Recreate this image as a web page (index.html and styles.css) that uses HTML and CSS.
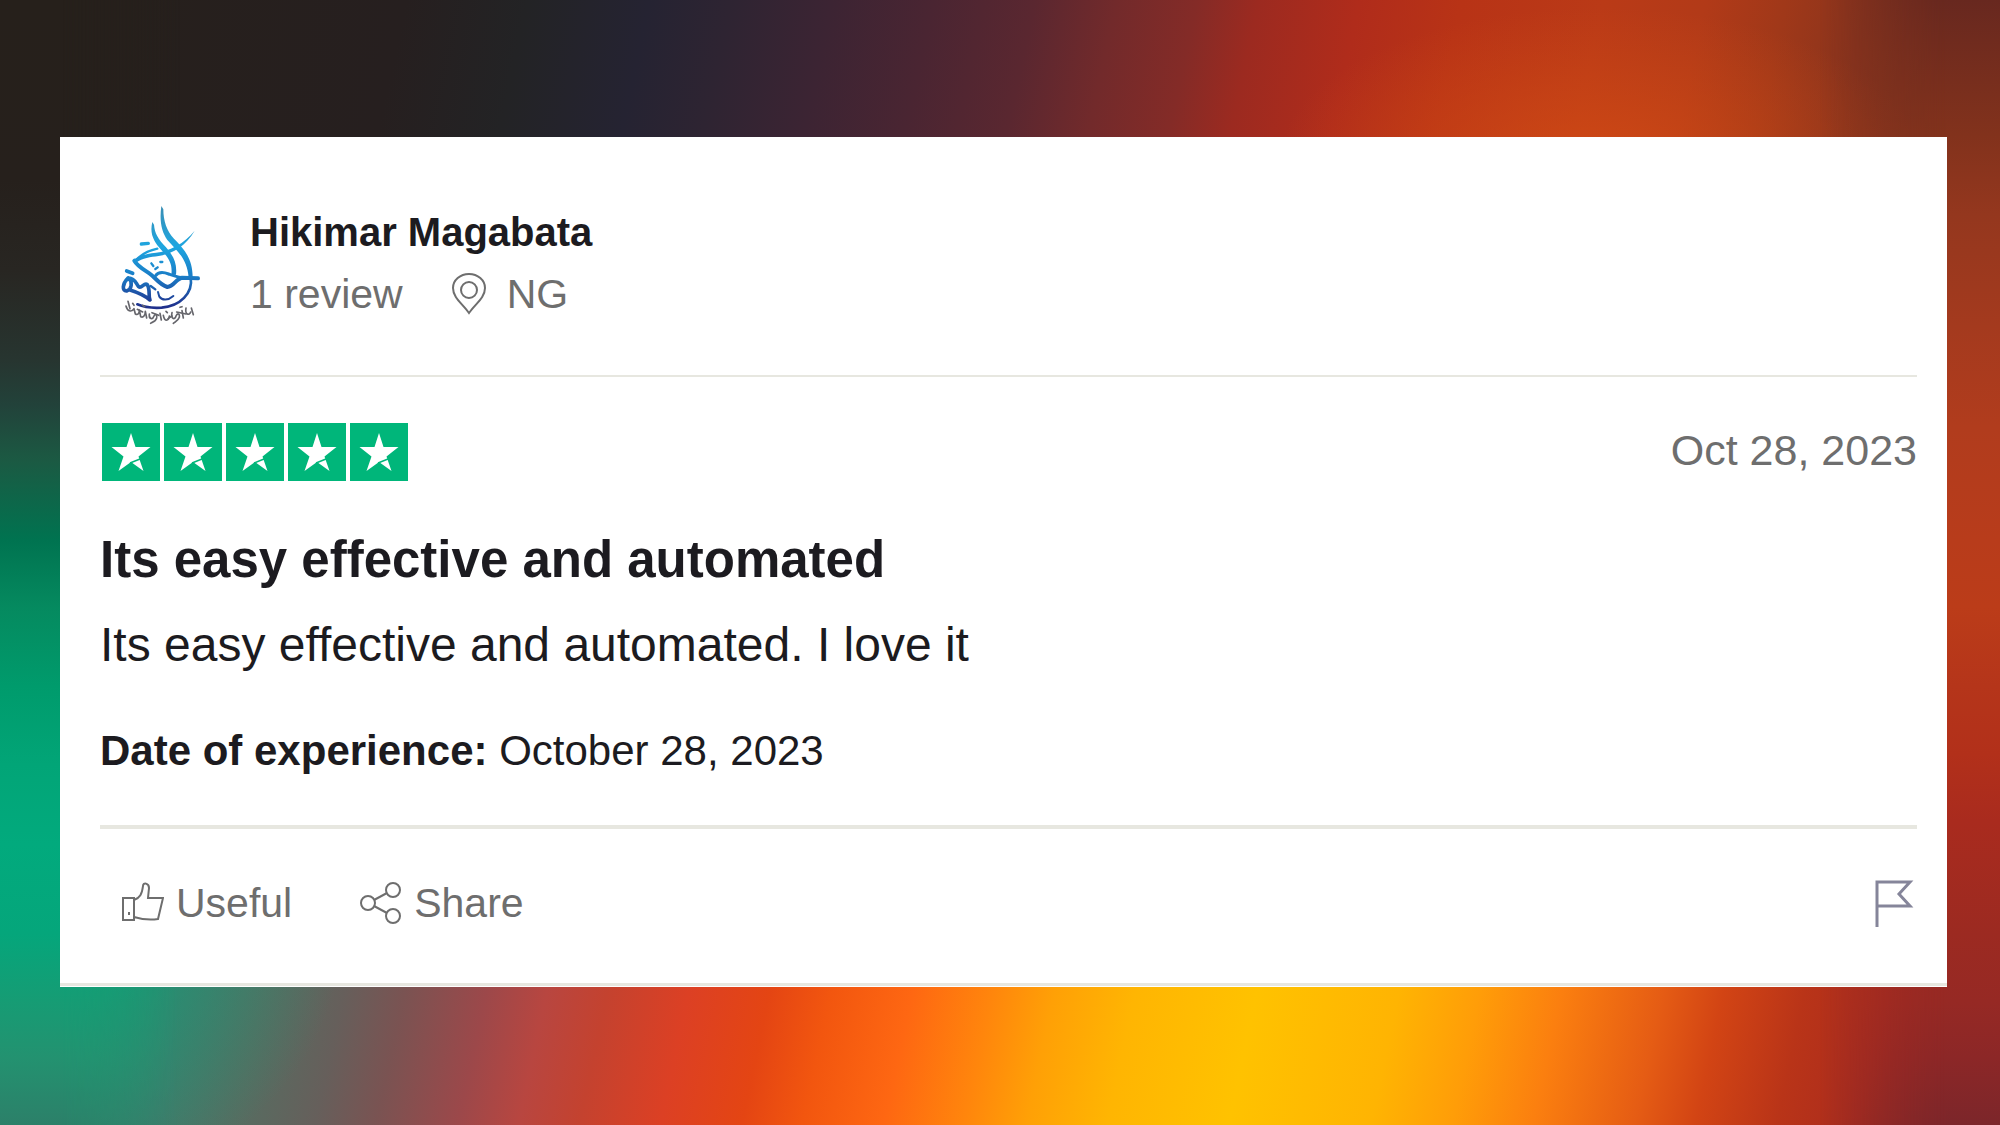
FILE: index.html
```
<!DOCTYPE html>
<html lang="en">
<head>
    <meta charset="UTF-8">
    <meta name="viewport" content="width=device-width, initial-scale=1.0">
    <title>Customer Review</title>
    <link rel="stylesheet" href="styles.css">
</head>
<body>
    <article class="card">
        <!-- Reviewer -->
        <header class="reviewer">
            <svg class="avatar" viewBox="0 0 360 450" fill="none" stroke-linecap="round" stroke-linejoin="round" aria-hidden="true">
                <defs>
                    <linearGradient id="ink" gradientUnits="userSpaceOnUse" x1="0" y1="50" x2="0" y2="350">
                        <stop offset="0" stop-color="#3a8fb5"/>
                        <stop offset="0.4" stop-color="#1ea6e0"/>
                        <stop offset="0.7" stop-color="#1a7cc6"/>
                        <stop offset="1" stop-color="#20308c"/>
                    </linearGradient>
                </defs>
                <g fill="url(#ink)">
                    <path d="M184 48 C178 92 184 124 202 150 C232 184 262 206 266 264 L278 262 C278 206 252 176 222 146 C200 124 190 92 190 58z"/>
                    <path d="M157 96 C148 132 162 156 184 180 C208 206 218 222 214 256 L228 254 C232 216 218 196 198 172 C174 146 164 130 162 104z"/>
                    <path d="M284 122 C254 160 208 184 168 188 C138 192 116 196 98 212 L106 220 C130 202 150 202 176 198 C222 190 258 166 284 122z"/>
                </g>
                <g stroke="url(#ink)">
                    <path d="M103 212 C112 228 130 238 148 250 C166 262 178 284 202 291 C222 290 228 266 246 263 L294 265" stroke-width="12"/>
                    <path d="M166 258 C174 246 190 246 206 252 C222 258 236 264 262 264" stroke-width="9"/>
                    <path d="M106 213 C125 190 145 182 172 176" stroke-width="7"/>
                    <path d="M124 162 L145 160" stroke-width="10"/>
                    <path d="M154 220 L160 228 M166 237 L173 232 M181 216 L187 216" stroke-width="7"/>
                    <path d="M272 262 C280 310 240 348 185 353 C152 355 128 350 112 343" stroke-width="8"/>
                    <path d="M80 243 L98 250" stroke-width="11"/>
                    <path d="M84 264 C66 282 66 304 80 303 C96 298 98 276 86 264 C106 264 108 282 116 290 C125 298 132 276 142 284 C152 300 144 320 150 330 C136 318 122 310 90 300" stroke-width="11"/>
                    <path d="M174 306 L178 320 C186 332 204 332 220 318" stroke-width="6"/>
                    <path d="M152 288 L166 298" stroke-width="7"/>
                </g>
                <g stroke="#66666c" stroke-width="5">
                    <path d="M84 334 L90 356 M78 348 C82 364 94 368 102 356 L106 372 C114 376 118 370 118 360 L122 380 C130 384 136 376 136 364 L140 384"/>
                    <path d="M148 372 C146 388 158 390 162 378 C166 370 172 374 170 384 C166 398 154 396 152 400 M180 370 L184 390 M190 376 C194 396 206 394 208 378 M198 364 L202 368"/>
                    <path d="M216 368 C212 386 224 392 228 378 C232 368 240 370 238 382 C234 394 224 396 220 400 M246 362 L250 384 M258 354 C254 374 268 378 272 366 M274 354 L280 374 M98 340 L102 346 M128 346 L134 350 M240 352 L246 350"/>
                    <path d="M112 358 L128 366 M156 368 L176 376 M204 386 L216 378 M230 366 L258 372"/>
                </g>
            </svg>
            <div class="reviewer-info">
                <h1 class="name">Hikimar Magabata</h1>
                <p class="meta">
                    <span>1 review</span>
                    <span class="place">
                        <svg class="pin" viewBox="0 0 36 42" fill="none" stroke="currentColor" stroke-width="2" aria-hidden="true">
                            <path d="M18 40 C12 31 2 25 2 15 A16 14 0 0 1 34 15 C34 25 24 31 18 40z"/>
                            <circle cx="18" cy="17" r="8"/>
                        </svg>
                        NG
                    </span>
                </p>
            </div>
        </header>

        <!-- Review -->
        <section class="review">
            <div class="rating">
                <svg class="stars" viewBox="0 0 306 58" role="img" aria-label="Rated 5 out of 5 stars">
                    <defs>
                        <g id="star">
                            <path fill="#00b67a" d="M0 0h58v58H0z"/>
                            <path fill="#fff" d="M29 10 L33.500 24 H48.500 L36.500 33.500 L37.500 36.500 L41.500 48 L29 39 L16.500 48 L21.500 33.500 L9.500 24 H24.500z"/>
                            <path stroke="#00b67a" stroke-width="1.500" d="M28 40 L38 36"/>
                        </g>
                    </defs>
                    <use href="#star"/>
                    <use href="#star" x="62"/>
                    <use href="#star" x="124"/>
                    <use href="#star" x="186"/>
                    <use href="#star" x="248"/>
                </svg>
                <time class="date" datetime="2023-10-28">Oct 28, 2023</time>
            </div>
            <h2 class="title">Its easy effective and automated</h2>
            <p class="text">Its easy effective and automated. I love it</p>
            <p class="experience"><b>Date of experience:</b> October 28, 2023</p>
        </section>

        <!-- Actions -->
        <footer class="actions">
            <button class="action" type="button">
                <svg class="icon" viewBox="0 0 42 42" fill="none" stroke="currentColor" stroke-width="2" aria-hidden="true">
                    <path d="M1 16 H12 V38 H1z M12 18 C18 16 20 12 21 4 C21 0 27 1 27 6 L26 16 H41 L36 37 C30 38 22 38 12 35"/>
                    <path d="M7 30v3"/>
                </svg>
                Useful
            </button>
            <button class="action" type="button">
                <svg class="icon" viewBox="0 0 42 42" fill="none" stroke="currentColor" stroke-width="2" aria-hidden="true">
                    <circle cx="8" cy="21" r="7"/>
                    <circle cx="33" cy="8" r="7"/>
                    <circle cx="33" cy="34" r="7"/>
                    <path d="M14 18 L27 11 M14 24 L27 31"/>
                </svg>
                Share
            </button>
            <button class="flag" type="button" aria-label="Report review">
                <svg class="flag-icon" viewBox="0 0 42 48" fill="none" stroke="currentColor" stroke-width="3" aria-hidden="true">
                    <path d="M2 48 V3 H35 L24 15 L35 27 H2"/>
                </svg>
            </button>
        </footer>
    </article>
</body>
</html>
```
FILE: styles.css
```
* {
    box-sizing: border-box;
}

body {
    position: relative;
    min-height: 100vh;
    margin: 0;
    padding: 137px 53px 138px 60px;
    font-family: "Liberation Sans", Arial, sans-serif;
    font-size: 41px;
    color: #1c1b20;
    /* warm glow, green glow, top band, bottom band */
    background:
        radial-gradient(ellipse 320px 150px at 80% 14%, #d24b14cc, #d24b1400) no-repeat,
        radial-gradient(ellipse 340px 260px at 0 84%, #0aa57add, #0aa57a00) no-repeat,
        linear-gradient(102deg, #26201b 0%, #261f1f 20%, #232325 26%, #252332 32%, #2e2432 36%, #3c2433 41%, #4a2532 46%, #5a2730 51%, #722a2b 55%, #842b27 59%, #9c2a20 62%, #b02c1b 67%, #b83316 72%, #ba3a17 79%, #b23a18 84%, #a03819 88%, #8a341d 92%, #76301f 97%, #6b2a20 100%) 0 0 / 100% 140px no-repeat,
        linear-gradient(102deg, #1f9672 0%, #2f8a6c 5%, #44796a 9%, #566d61 13%, #665f5b 17%, #7a5352 20%, #9c484a 24%, #b84640 27%, #c4422f 30%, #dc4024 34%, #e44513 38%, #f2560f 41%, #fe6712 45%, #ff860c 49%, #ffa006 52%, #ffb502 56%, #ffc200 62%, #ffb402 69%, #ff9d08 73%, #fb7f0f 77%, #e55c14 82%, #d24414 85%, #b93418 89%, #ab2c1e 93%, #922824 97%, #80262c 100%) 0 100% / 100% 140px no-repeat,
        #26201b;
}

/* side bands, faded into the top and bottom ones */
body::before,
body::after {
    content: "";
    position: absolute;
    top: 0;
    bottom: 0;
    width: 180px;
}

body::before {
    left: 0;
    background: linear-gradient(#26201b 0%, #26201c 16%, #282622 24%, #273530 32%, #22423a 36%, #1b5a43 41%, #007350 48%, #058a5f 54%, #009b6c 61%, #02a577 68%, #02aa7d 75%, #05a67b 83%, #169c74 89%, #239270 94%, #2c8069 100%);
    -webkit-mask-image: linear-gradient(to right, #000 34%, transparent);
    mask-image: linear-gradient(to right, #000 34%, transparent);
}

body::after {
    right: 0;
    background: linear-gradient(#68281f 0%, #82321c 12%, #94371e 19%, #a43a1e 29%, #b13c1d 38%, #b83c1b 48%, #bb3c19 54%, #b5351a 61%, #b2301a 67%, #a92b1e 73%, #9c2a21 83%, #962924 89%, #8c2727 94%, #7c262a 100%);
    -webkit-mask-image: linear-gradient(to left, #000 30%, transparent);
    mask-image: linear-gradient(to left, #000 30%, transparent);
}

.card {
    position: relative;
    z-index: 1;
    padding: 0 30px 0 40px;
    background: #fff;
    box-shadow: inset 0 -1px #fff, inset 0 -4px #e7e7e0;
}

h1,
h2,
p {
    margin: 0;
}

.reviewer {
    display: flex;
    align-items: center;
    gap: 30px;
    padding: 53px 0 35px;
    border-bottom: 2px solid #e7e7e0;
}

.avatar {
    flex: none;
    width: 120px;
    height: 150px;
}

.name {
    margin-bottom: 2px;
    font-size: 40px;
    line-height: 60px;
}

.meta {
    display: flex;
    align-items: center;
    gap: 48px;
    padding-bottom: 4px;
    line-height: 60px;
    color: #6e6e6e;
}

.place {
    display: flex;
    align-items: center;
    gap: 20px;
}

.pin {
    width: 36px;
    height: 42px;
}

.review {
    padding: 46px 0 44px;
    border-bottom: 4px solid #e7e7e0;
}

.rating {
    display: flex;
    align-items: flex-start;
    justify-content: space-between;
    padding-left: 2px;
}

.stars {
    width: 306px;
    height: 58px;
}

.date {
    font-size: 43px;
    line-height: 54px;
    color: #6e6e6e;
}

.title {
    margin-top: 45px;
    font-size: 51px;
    line-height: 68px;
}

.text {
    margin-top: 16px;
    font-size: 48px;
    line-height: 70px;
}

.experience {
    margin-top: 41px;
    font-size: 42px;
    line-height: 60px;
}

.actions {
    display: flex;
    align-items: center;
    gap: 68px;
    padding: 44px 0 54px 22px;
}

.action,
.flag {
    display: flex;
    align-items: center;
    gap: 12px;
    padding: 0;
    border: 0;
    background: none;
    font: inherit;
    line-height: 60px;
    color: #6e6e6e;
    cursor: pointer;
}

.icon {
    width: 42px;
    height: 42px;
}

.flag {
    margin-left: auto;
    color: #85859a;
}

.flag-icon {
    width: 42px;
    height: 48px;
}
```
